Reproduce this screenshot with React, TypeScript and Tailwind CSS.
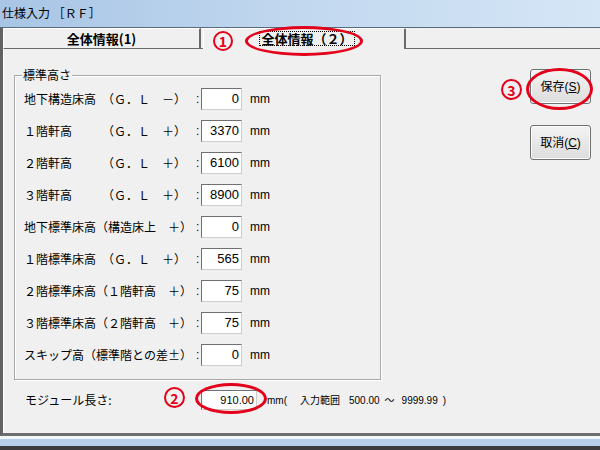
import React from "react";

const JP = "[font-family:'Noto_Sans_CJK_JP',sans-serif]";
const LAT = "[font-family:'Liberation_Sans','Noto_Sans_CJK_JP',sans-serif]";

type Row = { label: string; value: string };

const rows: Row[] = [
  { label: "地下構造床高　（Ｇ．Ｌ　－）", value: "0" },
  { label: "１階軒高　　　（Ｇ．Ｌ　＋）", value: "3370" },
  { label: "２階軒高　　　（Ｇ．Ｌ　＋）", value: "6100" },
  { label: "３階軒高　　　（Ｇ．Ｌ　＋）", value: "8900" },
  { label: "地下標準床高（構造床上　＋）", value: "0" },
  { label: "１階標準床高　（Ｇ．Ｌ　＋）", value: "565" },
  { label: "２階標準床高（１階軒高　＋）", value: "75" },
  { label: "３階標準床高（２階軒高　＋）", value: "75" },
  { label: "スキップ高（標準階との差±）", value: "0" },
];

function Box({ value, className }: { value: string; className: string }) {
  return (
    <div
      className={`shrink-0 border border-t-[#707070] border-l-[#707070] border-r-[#cdcdcd] border-b-[#cdcdcd] bg-white pr-[2px] text-right text-black ${LAT} ${className}`}
    >
      {value}
    </div>
  );
}

function Btn({ label, k }: { label: string; k: string }) {
  return (
    <div
      className={`flex h-[35px] w-[61px] items-center justify-center rounded-[3px] border border-[#707070] bg-linear-to-b from-[#f4f4f4] to-[#dcdcdc] text-[12px] text-black shadow-[inset_0_0_0_1px_#fbfbfb] ${LAT}`}
    >
      {label}(<span className="underline">{k}</span>)
    </div>
  );
}

export default function App() {
  return (
    <div className={`relative flex h-[450px] w-[600px] flex-col overflow-hidden bg-[#f0f0f0] text-black ${JP}`}>
      {/* title bar */}
      <div className="flex h-[28px] shrink-0 items-center border-b border-[#5c6b7b] bg-linear-to-r from-[#a8c5e5] via-[#c2d8ef] to-[#d5e6f6] pb-[1px] pl-[2px] text-[12px]">
        仕様入力 ［ＲＦ］
      </div>

      <div className="flex flex-1 flex-col border-b-[3px] border-l-[3px] border-b-[#6e6e6e] border-l-[#626262]">
        {/* tabs */}
        <div className="flex h-[21px] shrink-0">
          <div className="flex w-[198px] items-center justify-center rounded-tl-[3px] border-t border-l border-r-2 border-b border-t-white border-l-white border-r-[#6a6a6a] border-b-[#6a6a6a] text-[13px] font-bold">
            全体情報(1)
          </div>
          <div className="w-[2px] border-b border-[#6a6a6a]" />
          <div className="flex w-[203px] items-center justify-center rounded-tr-[2px] border-t border-l border-r-2 border-t-white border-l-white border-r-[#6a6a6a] pb-[1px] pl-[6px]">
            <span className="border border-dotted border-black px-[1px] text-[13px] font-bold leading-[13px]">
              全体情報（２）
            </span>
          </div>
          <div className="flex-1 border-b border-[#6a6a6a]" />
        </div>

        {/* panel */}
        <div className="flex flex-1 border-l border-white">
          <div className="ml-[10px] flex w-[367px] shrink-0 flex-col">
            <div className="relative mt-[26px] w-[367px] border border-[#a9a9a9] pb-[8px] pl-[9px] pt-[7px] shadow-[inset_1px_1px_0_#ffffff,1px_1px_0_#ffffff]">
              <span className="absolute -top-[9px] left-[7px] bg-[#f0f0f0] px-[1px] text-[12px] leading-[16px]">
                標準高さ
              </span>
              {rows.map((r) => (
                <div key={r.label} className="flex h-[32px] items-center">
                  <span className="w-[172px] shrink-0 whitespace-pre text-[12px]">{r.label}</span>
                  <span className={`w-[5px] shrink-0 text-[12px] ${LAT}`}>:</span>
                  <Box value={r.value} className="h-[22px] w-[41px] text-[13px] leading-[20px]" />
                  <span className={`ml-[8px] text-[12px] ${LAT}`}>mm</span>
                </div>
              ))}
            </div>

            <div className="mt-[10px] flex h-[20px] items-center whitespace-nowrap pl-[11px]">
              <span className="w-[176px] shrink-0 text-[12px]">モジュール長さ:</span>
              <Box value="910.00" className="h-[20px] w-[56px] text-[11px] leading-[18px]" />
              <div className={`ml-[10px] flex shrink-0 items-center text-[10px] ${LAT}`}>
                <span>mm(</span>
                <span className="ml-[13px]">入力範囲</span>
                <span className="ml-[9px]">500.00</span>
                <span className="ml-[5px]">～</span>
                <span className="ml-[7px]">9999.99</span>
                <span className="ml-[5px]">)</span>
              </div>
            </div>
          </div>

          <div className="ml-[149px] mt-[20px] flex shrink-0 flex-col gap-[21px]">
            <Btn label="保存" k="S" />
            <Btn label="取消" k="C" />
          </div>
        </div>
      </div>

      {/* window frame */}
      <div className="h-[3px] shrink-0 bg-[#f3f6fa]" />
      <div className="h-[7px] shrink-0 bg-[#b8d0ea]" />
      <div className="h-[4px] shrink-0 bg-[#3d3d3d]" />

      {/* red annotations */}
      <div className="absolute left-[213px] top-[31px] flex h-[20px] w-[20px] items-center justify-center rounded-full border-2 border-[#e3001b] text-[14px] font-bold leading-none text-[#e3001b]">
        1
      </div>
      <div className="absolute left-[245px] top-[26px] h-[30px] w-[118px] rounded-[50%] border-[3px] border-[#e3001b]" />

      <div className="absolute left-[164px] top-[387px] flex h-[21px] w-[21px] items-center justify-center rounded-full border-2 border-[#e3001b] text-[14px] font-bold leading-none text-[#e3001b]">
        2
      </div>
      <div className="absolute left-[195px] top-[383px] h-[31px] w-[72px] rounded-[50%] border-[3px] border-[#e3001b]" />

      <div className="absolute left-[501px] top-[79px] flex h-[21px] w-[21px] items-center justify-center rounded-full border-2 border-[#e3001b] text-[14px] font-bold leading-none text-[#e3001b]">
        3
      </div>
      <div className="absolute left-[526px] top-[68px] h-[42px] w-[67px] rounded-[50%] border-[3px] border-[#e3001b]" />
    </div>
  );
}
